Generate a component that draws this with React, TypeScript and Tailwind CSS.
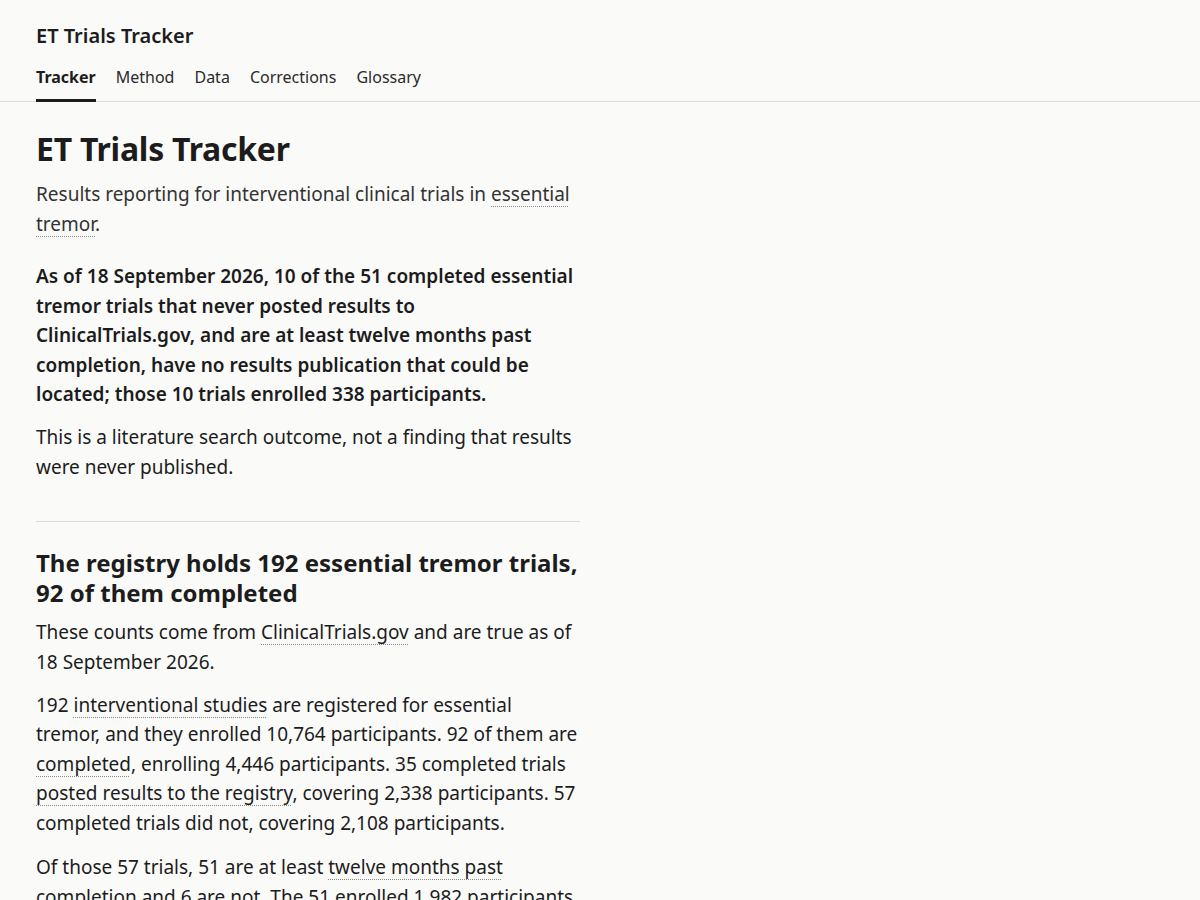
import React from "react";

const navItems = ["Tracker", "Method", "Data", "Corrections", "Glossary"];

function Term({ children }: { children: React.ReactNode }) {
  return (
    <a className="underline decoration-dotted decoration-[#8a8a8a] decoration-1 underline-offset-[5px] text-inherit">
      {children}
    </a>
  );
}

export default function App() {
  return (
    <div
      className="min-h-screen bg-[#fafaf9] text-[#1c1c1c]"
      style={{ fontFamily: '"Noto Sans", "Open Sans", sans-serif' }}
    >
      <header className="border-b border-[#dcdcdc]">
        <div className="px-9">
          <div className="pt-[22px] text-[20px] font-semibold leading-7">ET Trials Tracker</div>
          <nav className="-mb-px mt-[15px] flex gap-5 text-[16px]">
            {navItems.map((item, i) => (
              <a
                key={item}
                className={
                  i === 0
                    ? "border-b-[3px] border-[#1c1c1c] pb-[10px] font-bold"
                    : "border-b-[3px] border-transparent pb-[10px] text-[#2a2a2a]"
                }
              >
                {item}
              </a>
            ))}
          </nav>
        </div>
      </header>

      <main className="max-w-[616px] px-9 pt-[25px] pb-10">
        <h1 className="text-[32px] font-bold leading-[44px] tracking-[-0.25px]">ET Trials Tracker</h1>
        <p className="mt-[8px] text-[19px] leading-[30px] text-[#333]">
          Results reporting for interventional clinical trials in <Term>essential tremor</Term>.
        </p>

        <p className="mt-[23px] max-w-[541px] text-[19px] font-semibold leading-[29.5px]">
          As of 18 September 2026, 10 of the 51 completed essential tremor trials that never posted
          results to ClinicalTrials.gov, and are at least twelve months past completion, have no
          results publication that could be located; those 10 trials enrolled 338 participants.
        </p>
        <p className="mt-[12px] text-[19px] leading-[30px]">
          This is a literature search outcome, not a finding that results were never published.
        </p>

        <hr className="mt-[39px] border-[#dcdcdc]" />

        <section className="pt-[26px]">
          <h2 className="text-[24px] font-bold leading-[30px]">
            The registry holds 192 essential tremor trials, 92 of them completed
          </h2>
          <p className="mt-[9px] text-[19px] leading-[30px]">
            These counts come from <Term>ClinicalTrials.gov</Term> and are true as of 18 September
            2026.
          </p>
          <p className="mt-[14px] text-[19px] leading-[29.6px]">
            192 <Term>interventional studies</Term> are registered for essential tremor, and they
            enrolled 10,764 participants. 92 of them are <Term>completed</Term>, enrolling 4,446
            participants. 35 completed trials <Term>posted results to the registry</Term>, covering
            2,338 participants. 57 completed trials did not, covering 2,108 participants.
          </p>
          <p className="mt-[15px] text-[19px] leading-[29.6px]">
            Of those 57 trials, 51 are at least <Term>twelve months past completion</Term> and 6 are
            not. The 51 enrolled 1,982 participants.
          </p>
        </section>
      </main>
    </div>
  );
}
